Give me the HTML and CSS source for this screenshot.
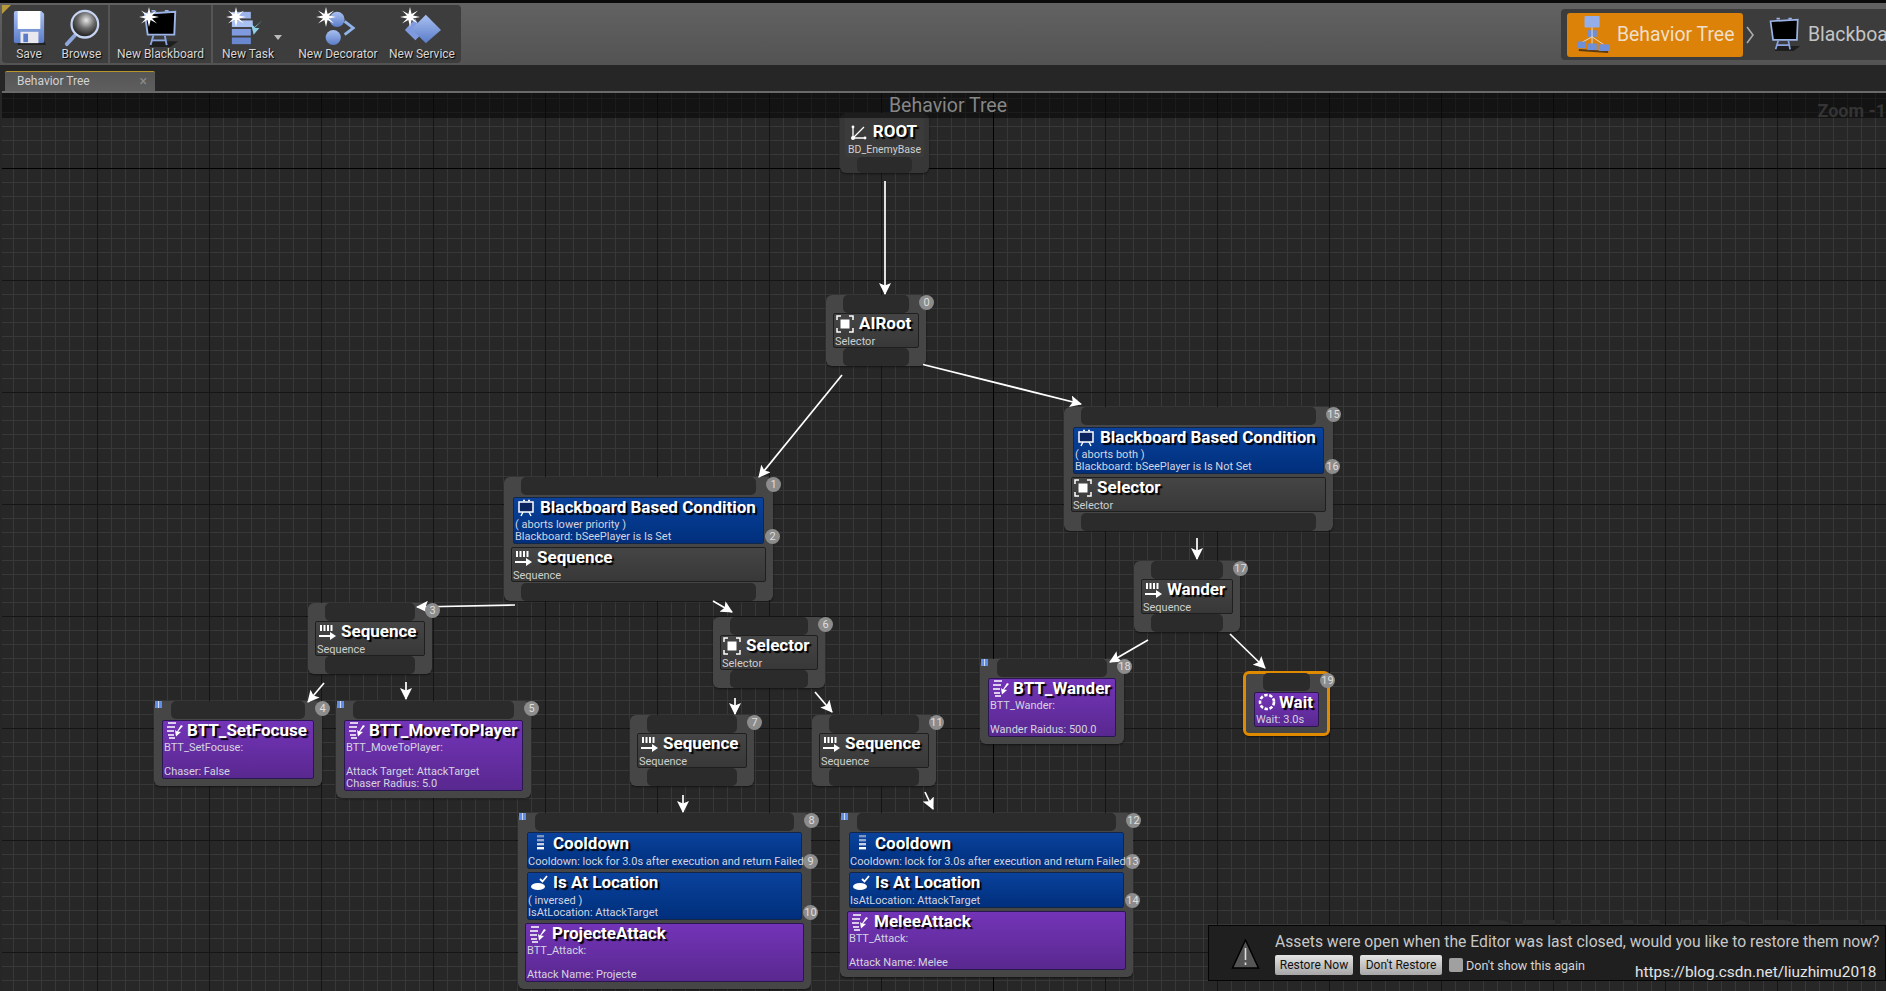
FILE: index.html
```html
<!doctype html>
<html>
<head>
<meta charset='utf-8'>
<title>Behavior Tree</title>
<link rel="stylesheet" href="styles.css">
</head>
<body>
<svg class='defs' width='0' height='0'>
  <defs>
    <linearGradient id='g_blue' x1='0' y1='0' x2='0' y2='1'><stop offset='0' stop-color='#a9c0f2'/><stop offset='1' stop-color='#5a7cc8'/></linearGradient>
    <radialGradient id='g_lens' cx='.55' cy='.35' r='.7'><stop offset='0' stop-color='#e8e8e8'/><stop offset='.45' stop-color='#6a6a6a'/><stop offset='1' stop-color='#0c0c0c'/></radialGradient>
    <symbol id='i_star' viewBox='0 0 20 20'><polygon fill='#fff' points='10,0 11.6,7 18,3.5 13,8.6 20,10 13,11.4 18,16.5 11.6,13 10,20 8.4,13 2,16.5 7,11.4 0,10 7,8.6 2,3.5 8.4,7'/></symbol>
    <symbol id='i_save' viewBox='0 0 36 38'>
      <path d='M6 37 L36 37 L33 30 L6 30Z' fill='#111' opacity='.6'/>
      <path d='M2 3 Q2 1 4 1 L31 1 L34 4 L34 33 Q34 35 32 35 L4 35 Q2 35 2 33Z' fill='url(#g_blue)'/>
      <rect x='6' y='1' width='24' height='19' fill='#fff'/>
      <rect x='9' y='23' width='19' height='12' fill='#e8e8ee'/>
      <rect x='12' y='25' width='5' height='9' fill='#5a7cc8'/>
    </symbol>
    <symbol id='i_browse' viewBox='0 0 40 40'>
      <path d='M4 37 L15 25' stroke='#8fa6dc' stroke-width='4' stroke-linecap='round'/>
      <circle cx='23' cy='16' r='14' fill='url(#g_lens)' stroke='#c6d4f2' stroke-width='2.4'/>
    </symbol>
    <symbol id='i_board' viewBox='0 0 40 40'>
      <path d='M10 34 L38 34 L30 40 L8 40Z' fill='#111' opacity='.7'/>
      <path d='M10 2 L14 2 M24 2 L28 2' stroke='#9db4e8' stroke-width='2'/>
      <path d='M3 5 L35 3 L34 27 L6 27Z' fill='#000' stroke='#9db4e8' stroke-width='2'/>
      <path d='M12 28 L9 38 M24 28 L26 38 M10 33 L25 33' stroke='#8aa4e0' stroke-width='2' fill='none'/>
    </symbol>
    <symbol id='i_task' viewBox='0 0 40 40'>
      <rect x='3' y='3' width='20' height='7' fill='#9db4e8'/>
      <rect x='3' y='12' width='22' height='7' fill='#a9c0f2'/>
      <rect x='3' y='21' width='20' height='7' fill='#7f9ade'/>
      <rect x='3' y='30' width='20' height='7' fill='#6a88d0'/>
      <path d='M35 12 L27 20 L32 20 L26 27 L23 15 L27 19Z' fill='#8fd0ea'/>
    </symbol>
    <symbol id='i_deco' viewBox='0 0 40 40'>
      <circle cx='19' cy='11' r='8' fill='url(#g_blue)'/>
      <circle cx='15' cy='30' r='8' fill='url(#g_blue)'/>
      <path d='M27 13 L36 20 L27 27' stroke='#8fb4ea' stroke-width='3' fill='none'/>
    </symbol>
    <symbol id='i_serv' viewBox='0 0 40 40'>
      <path d='M13 10 L2 22 L13 33 L20 26Z' fill='#7f9ade'/>
      <path d='M24 6 L40 22 L24 36 L9 21Z' fill='url(#g_blue)'/>
    </symbol>
    <symbol id='i_tree' viewBox='0 0 36 40'>
      <rect x='9' y='1' width='16' height='12' rx='1' fill='#93aee8'/>
      <rect x='12' y='16' width='10' height='7' fill='#6f8fd8'/>
      <path d='M17 13V31M17 23L6 29M17 23L29 31' stroke='#ddd' stroke-width='1'/>
      <path d='M3 37L34 39' stroke='#5a3a10' stroke-width='2'/>
      <rect x='1' y='28' width='9' height='7' fill='#6f8fd8'/>
      <rect x='12' y='30' width='10' height='7' fill='#6f8fd8'/>
      <rect x='24' y='31' width='11' height='7' fill='#6f8fd8'/>
    </symbol>
    <symbol id='n_board' viewBox='0 0 18 18'>
      <path d='M2 3H16V13H2Z' fill='#0c2560' stroke='#fff' stroke-width='1.5'/>
      <path d='M6 13L4 17M12 13L14 17M6 1.5H8M11 1.5H13' stroke='#fff' stroke-width='1.4'/>
    </symbol>
    <symbol id='n_seq' viewBox='0 0 18 18'>
      <path d='M3 2V8M6.5 2V8M10 2V8M13.5 2V8' stroke='#fff' stroke-width='2'/>
      <path d='M1 12H13V14H1Z' fill='#fff'/><path d='M12 9L18 13L12 17Z' fill='#fff'/>
    </symbol>
    <symbol id='n_sel' viewBox='0 0 18 18'>
      <rect x='4.5' y='4.5' width='9' height='9' fill='#fff'/>
      <path d='M1 5V1H5M13 1H17V5M17 13V17H13M5 17H1V13' stroke='#fff' stroke-width='1.5' fill='none'/>
    </symbol>
    <symbol id='n_task' viewBox='0 0 18 18'>
      <path d='M2 2H10M1 6H9M1 10H8M2 14H8M3 17H9' stroke='#fff' stroke-width='1.6'/>
      <path d='M17 5L12 10.5L15 11L10 15.5L9 9L11 10.5L15 4Z' fill='#fff'/>
    </symbol>
    <symbol id='n_cool' viewBox='0 0 18 18'>
      <rect x='6' y='1' width='7' height='2.4' fill='#7f95bd'/>
      <rect x='6' y='5' width='7' height='2.4' fill='#97a9cb'/>
      <rect x='6' y='9' width='7' height='2.4' fill='#c6d0e4'/>
      <rect x='6' y='13' width='7' height='2.4' fill='#fff'/>
    </symbol>
    <symbol id='n_loc' viewBox='0 0 18 18'>
      <ellipse cx='7' cy='12.5' rx='7' ry='3.6' fill='#fff'/>
      <path d='M9 5L11.5 7.5L16 2' stroke='#fff' stroke-width='1.8' fill='none'/>
    </symbol>
    <symbol id='n_wait' viewBox='0 0 18 18'>
      <circle cx='9' cy='9' r='7' stroke='#fff' stroke-width='2.6' stroke-dasharray='3.4 1.6' fill='none'/>
    </symbol>
    <symbol id='n_root' viewBox='0 0 18 18'>
      <path d='M3 15L14 4M3 15V5M3 15H14' stroke='#fff' stroke-width='1.3' fill='none'/>
      <circle cx='3' cy='15' r='2' fill='#fff'/><circle cx='3' cy='4' r='1.4' fill='#fff'/><circle cx='15' cy='15' r='1.4' fill='#fff'/>
    </symbol>
    <marker id='head' viewBox='0 0 12 12' refX='11' refY='6' markerUnits='userSpaceOnUse' markerWidth='12' markerHeight='12' orient='auto'>
      <path d='M0 0L12 6L0 12L2.5 6Z' fill='#fff'/>
    </marker>
  </defs>
</svg>

<div class='topbar'>
  <div class='toolbar'>
    <i class='corner'></i>
    <div class='tool tool_save'><svg class='tool_icon'><use href='#i_save'/></svg><span>Save</span></div>
    <div class='tool tool_browse'><svg class='tool_icon'><use href='#i_browse'/></svg><span>Browse</span></div>
    <b class='sep'></b>
    <div class='tool tool_bb'><span class='icon_wrap'><svg class='tool_icon'><use href='#i_board'/></svg><svg class='spark'><use href='#i_star'/></svg></span><span>New Blackboard</span></div>
    <b class='sep'></b>
    <div class='tool tool_task'><span class='icon_wrap'><svg class='tool_icon'><use href='#i_task'/></svg><svg class='spark'><use href='#i_star'/></svg></span><span>New Task</span><i class='drop'></i></div>
    <div class='tool tool_deco'><span class='icon_wrap'><svg class='tool_icon'><use href='#i_deco'/></svg><svg class='spark'><use href='#i_star'/></svg></span><span>New Decorator</span></div>
    <div class='tool tool_serv'><span class='icon_wrap'><svg class='tool_icon'><use href='#i_serv'/></svg><svg class='spark'><use href='#i_star'/></svg></span><span>New Service</span></div>
  </div>
  <div class='crumbs'>
    <div class='crumb_on'><svg class='crumb_icon'><use href='#i_tree'/></svg><span>Behavior Tree</span></div>
    <svg class='chev' viewBox='0 0 10 20'><path d='M2 2L8 10L2 18' stroke='#aaa' stroke-width='1.6' fill='none'/></svg>
    <div class='crumb_off'><svg class='crumb_icon'><use href='#i_board'/></svg><span>Blackboard</span></div>
  </div>
</div>

<div class='tabrow'>
  <div class='tab'><span>Behavior Tree</span><em>×</em></div>
</div>

<div class='graph'>
  <div class='graph_title'><span>Behavior Tree</span><b>Zoom -1</b></div>

  <div class='node n_root'>
    <div class='box box_root'>
      <div class='title'><svg class='nicon'><use href='#n_root'/></svg>ROOT</div>
      <div class='sub'>BD_EnemyBase</div>
    </div>
    <div class='pin'></div>
  </div>

  <div class='node n_airoot'>
    <div class='pin'></div>
    <div class='box'>
      <div class='title'><svg class='nicon'><use href='#n_sel'/></svg>AIRoot</div>
      <div class='sub'>Selector</div>
    </div>
    <div class='pin'></div>
    <span class='badge'>0</span>
  </div>

  <div class='node n_bbl'>
    <div class='pin'></div>
    <div class='row blue first'>
      <div class='title'><svg class='nicon'><use href='#n_board'/></svg>Blackboard Based Condition</div>
      <div class='sub'>( aborts lower priority )<br>Blackboard: bSeePlayer is Is Set</div>
      <span class='badge'>2</span>
    </div>
    <div class='box wide'>
      <div class='title'><svg class='nicon'><use href='#n_seq'/></svg>Sequence</div>
      <div class='sub'>Sequence</div>
    </div>
    <div class='pin'></div>
    <span class='badge'>1</span>
  </div>

  <div class='node n_bbr'>
    <div class='pin'></div>
    <div class='row blue first'>
      <div class='title'><svg class='nicon'><use href='#n_board'/></svg>Blackboard Based Condition</div>
      <div class='sub'>( aborts both )<br>Blackboard: bSeePlayer is Is Not Set</div>
      <span class='badge'>16</span>
    </div>
    <div class='box wide'>
      <div class='title'><svg class='nicon'><use href='#n_sel'/></svg>Selector</div>
      <div class='sub'>Selector</div>
    </div>
    <div class='pin'></div>
    <span class='badge'>15</span>
  </div>

  <div class='node n_seq3'>
    <div class='pin'></div>
    <div class='box'>
      <div class='title'><svg class='nicon'><use href='#n_seq'/></svg>Sequence</div>
      <div class='sub'>Sequence</div>
    </div>
    <div class='pin'></div>
    <span class='badge'>3</span>
  </div>

  <div class='node n_sel6'>
    <div class='pin'></div>
    <div class='box'>
      <div class='title'><svg class='nicon'><use href='#n_sel'/></svg>Selector</div>
      <div class='sub'>Selector</div>
    </div>
    <div class='pin'></div>
    <span class='badge'>6</span>
  </div>

  <div class='node n_seq7'>
    <div class='pin'></div>
    <div class='box'>
      <div class='title'><svg class='nicon'><use href='#n_seq'/></svg>Sequence</div>
      <div class='sub'>Sequence</div>
    </div>
    <div class='pin'></div>
    <span class='badge'>7</span>
  </div>

  <div class='node n_seq11'>
    <div class='pin'></div>
    <div class='box'>
      <div class='title'><svg class='nicon'><use href='#n_seq'/></svg>Sequence</div>
      <div class='sub'>Sequence</div>
    </div>
    <div class='pin'></div>
    <span class='badge'>11</span>
  </div>

  <div class='node n_wander'>
    <div class='pin'></div>
    <div class='box'>
      <div class='title'><svg class='nicon'><use href='#n_seq'/></svg>Wander</div>
      <div class='sub'>Sequence</div>
    </div>
    <div class='pin'></div>
    <span class='badge'>17</span>
  </div>

  <div class='node n_focuse leaf'>
    <i class='flag'></i>
    <div class='pin'></div>
    <div class='row purple'>
      <div class='title'><svg class='nicon'><use href='#n_task'/></svg>BTT_SetFocuse</div>
      <div class='sub'>BTT_SetFocuse:<br><br>Chaser: False</div>
    </div>
    <span class='badge'>4</span>
  </div>

  <div class='node n_move leaf'>
    <i class='flag'></i>
    <div class='pin'></div>
    <div class='row purple'>
      <div class='title'><svg class='nicon'><use href='#n_task'/></svg>BTT_MoveToPlayer</div>
      <div class='sub'>BTT_MoveToPlayer:<br><br>Attack Target: AttackTarget<br>Chaser Radius: 5.0</div>
    </div>
    <span class='badge'>5</span>
  </div>

  <div class='node n_btw leaf'>
    <i class='flag'></i>
    <div class='pin'></div>
    <div class='row purple'>
      <div class='title'><svg class='nicon'><use href='#n_task'/></svg>BTT_Wander</div>
      <div class='sub'>BTT_Wander:<br><br>Wander Raidus: 500.0</div>
    </div>
    <span class='badge'>18</span>
  </div>

  <div class='node n_wait leaf'>
    <div class='pin'></div>
    <div class='row purple'>
      <div class='title'><svg class='nicon'><use href='#n_wait'/></svg>Wait</div>
      <div class='sub'>Wait: 3.0s</div>
    </div>
    <span class='badge'>19</span>
  </div>

  <div class='node n_cooll leaf'>
    <i class='flag'></i>
    <div class='pin'></div>
    <div class='row blue cool cool_top'>
      <div class='title wide_icon'><svg class='nicon'><use href='#n_cool'/></svg>Cooldown</div>
      <div class='sub'>Cooldown: lock for 3.0s after execution and return Failed</div>
      <span class='badge'>9</span>
    </div>
    <div class='row blue cool'>
      <div class='title wide_icon'><svg class='nicon'><use href='#n_loc'/></svg>Is At Location</div>
      <div class='sub'>( inversed )<br>IsAtLocation: AttackTarget</div>
      <span class='badge'>10</span>
    </div>
    <div class='row purple big'>
      <div class='title'><svg class='nicon'><use href='#n_task'/></svg>ProjecteAttack</div>
      <div class='sub'>BTT_Attack:<br><br>Attack Name: Projecte</div>
    </div>
    <span class='badge'>8</span>
  </div>

  <div class='node n_coolr leaf'>
    <i class='flag'></i>
    <div class='pin'></div>
    <div class='row blue cool cool_top'>
      <div class='title wide_icon'><svg class='nicon'><use href='#n_cool'/></svg>Cooldown</div>
      <div class='sub'>Cooldown: lock for 3.0s after execution and return Failed</div>
      <span class='badge'>13</span>
    </div>
    <div class='row blue cool'>
      <div class='title wide_icon'><svg class='nicon'><use href='#n_loc'/></svg>Is At Location</div>
      <div class='sub'>IsAtLocation: AttackTarget</div>
      <span class='badge'>14</span>
    </div>
    <div class='row purple big'>
      <div class='title'><svg class='nicon'><use href='#n_task'/></svg>MeleeAttack</div>
      <div class='sub'>BTT_Attack:<br><br>Attack Name: Melee</div>
    </div>
    <span class='badge'>12</span>
  </div>

  <svg class='wires' width='1884' height='898'>
    <g stroke='#fff' stroke-width='1.7' marker-end='url(#head)'>
      <line x1='883' y1='88' x2='883' y2='201'/>
      <line x1='840' y1='282' x2='757' y2='384'/>
      <line x1='921' y1='271.5' x2='1079' y2='311'/>
      <line x1='513' y1='512' x2='415' y2='514'/>
      <line x1='711' y1='508' x2='730' y2='519'/>
      <line x1='322' y1='590' x2='306' y2='609'/>
      <line x1='404' y1='589' x2='404' y2='606'/>
      <line x1='733' y1='605' x2='733' y2='621'/>
      <line x1='813' y1='599' x2='830' y2='619'/>
      <line x1='681' y1='702' x2='681' y2='719'/>
      <line x1='923' y1='699' x2='931' y2='716'/>
      <line x1='1195' y1='445' x2='1195' y2='466'/>
      <line x1='1146' y1='547' x2='1108' y2='569'/>
      <line x1='1228' y1='541' x2='1263' y2='575'/>
    </g>
  </svg>

  <div class='watermark'>BEHAVIOR TREE</div>

  <div class='toast'>
    <svg class='warn' viewBox='0 0 28 30'>
      <path d='M14 1L27 29H1Z' fill='#555' stroke='#000' stroke-width='1.5'/>
      <path d='M14 9V21M14 23.5V26' stroke='#ddd' stroke-width='1.6'/>
    </svg>
    <div class='toast_body'>
      <div class='toast_msg'>Assets were open when the Editor was last closed, would you like to restore them now?</div>
      <div class='toast_actions'>
        <button class='btn btn_restore'>Restore Now</button>
        <button class='btn btn_dont'>Don't Restore</button>
        <i class='check'></i>
        <span class='check_label'>Don't show this again</span>
        <span class='credit'>https://blog.csdn.net/liuzhimu2018</span>
      </div>
    </div>
  </div>
</div>
</body>
</html>
```

FILE: styles.css
```css
html, body {
  margin: 0;
  padding: 0;
  width: 1886px;
  height: 991px;
  overflow: hidden;
  background: #262626;
  font-family: Roboto, "Liberation Sans", sans-serif;
}

.defs {
  position: absolute;
}

/* top strip */
.topbar {
  height: 62px;
  border-top: 3px solid #0a0a0a;
  background: linear-gradient(#626262, #535353);
  display: flex;
  justify-content: space-between;
  overflow: hidden;
}
.toolbar {
  position: relative;
  margin: 2px 0 2px 2px;
  width: 459px;
  box-sizing: border-box;
  padding-left: 1px;
  background: #3d3d3d;
  border-radius: 4px;
  display: flex;
  color: #d6d6d6;
  font-size: 12px;
}
.corner {
  position: absolute;
  left: 0;
  top: 0;
  border-top: 9px solid #b89a3a;
  border-right: 9px solid transparent;
}
.tool {
  position: relative;
  display: flex;
  flex-direction: column;
  align-items: center;
  justify-content: flex-end;
  padding-bottom: 2px;
  box-sizing: border-box;
  white-space: nowrap;
  text-shadow: 1px 1px 1px #000;
}
.tool_icon {
  width: 38px;
  height: 38px;
  display: block;
}
.tool_save { width: 52px; }
.tool_browse { width: 53px; }
.tool_bb { width: 101px; }
.tool_task { width: 80px; padding-right: 10px; }
.tool_deco { width: 90px; }
.tool_serv { width: 78px; }
.tool_save .tool_icon { width: 34px; }
.icon_wrap {
  position: relative;
}
.spark {
  position: absolute;
  left: -3px;
  top: -2px;
  width: 20px;
  height: 20px;
}
.drop {
  position: absolute;
  right: 11px;
  top: 30px;
  border-top: 5px solid #bbb;
  border-left: 4px solid transparent;
  border-right: 4px solid transparent;
}
.sep {
  width: 2px;
  background: #555;
  margin: 0;
}
.crumbs {
  margin: 6px 0 0;
  height: 51px;
  width: 325px;
  box-sizing: border-box;
  background: #3c3c3c;
  border-radius: 4px 0 0 4px;
  padding: 4px 0 0 6px;
  display: flex;
  align-items: flex-start;
  overflow: hidden;
  font-size: 19.4px;
  flex: none;
}
.crumb_on {
  width: 176px;
  height: 44px;
  box-sizing: border-box;
  padding: 0 0 2px 9px;
  background: #dc8208;
  border-radius: 3px;
  color: #f0dfc8;
  display: flex;
  align-items: center;
  gap: 7px;
  flex: none;
}
.crumb_off {
  height: 44px;
  padding-bottom: 2px;
  box-sizing: border-box;
  display: flex;
  align-items: center;
  gap: 6px;
  color: #c4c4c4;
  white-space: nowrap;
}
.crumb_icon {
  width: 34px;
  height: 38px;
  flex: none;
}
.chev {
  width: 10px;
  height: 20px;
  margin: 12px 13px 0 2px;
  flex: none;
}

/* tab row */
.tabrow {
  height: 26px;
  background: #262626;
  box-sizing: border-box;
  padding: 6px 0 0 5px;
}
.tab {
  width: 150px;
  height: 20px;
  box-sizing: border-box;
  background: linear-gradient(#565656, #5e5e5e);
  border-top: 1px solid #b8962e;
  border-radius: 2px 2px 0 0;
  padding: 0 8px 2px 12px;
  display: flex;
  justify-content: space-between;
  align-items: center;
  color: #d2d2d2;
  font-size: 12px;
}
.tab em {
  font-style: normal;
  color: #8a8a8a;
  font-size: 14px;
}

/* graph canvas */
.graph {
  position: relative;
  height: 898px;
  margin-left: 2px;
  overflow: hidden;
  border-top: 2px solid #6a6a6a;
  box-sizing: content-box;
  background-color: #272727;
  background-image:
    linear-gradient(to right, #000 1px, transparent 1px),
    linear-gradient(to bottom, #000 1px, transparent 1px),
    linear-gradient(to right, #151515 1px, transparent 1px),
    linear-gradient(to bottom, #151515 1px, transparent 1px),
    linear-gradient(to right, #383838 1px, transparent 1px),
    linear-gradient(to bottom, #383838 1px, transparent 1px);
  background-size: 1884px 898px, 1884px 898px, 112px 112px, 112px 112px, 14px 14px, 14px 14px;
  background-repeat: no-repeat, no-repeat, repeat, repeat, repeat, repeat;
  background-position: 991px 0, 0 75px, 95px 0, 0 75px, 11px 0, 0 5px;
}
.graph_title {
  position: absolute;
  z-index: 5;
  left: 0;
  right: 0;
  top: 0;
  height: 25px;
  box-sizing: border-box;
  padding-left: 8px;
  background: rgba(0, 0, 0, .5);
  color: #868686;
  font-size: 19.5px;
  line-height: 25px;
  text-align: center;
}
.graph_title b {
  position: absolute;
  right: 0;
  top: 5px;
  color: #343434;
  font-size: 18px;
}
.wires {
  position: absolute;
  z-index: 3;
  left: 0;
  top: 0;
}

/* nodes */
.node {
  position: absolute;
  box-sizing: border-box;
  background: #464646;
  border-radius: 6px;
  display: flex;
  flex-direction: column;
  box-shadow: 0 1px 2px rgba(0, 0, 0, .5);
}
.leaf {
  padding-bottom: 7px;
}
.pin {
  height: 18px;
  margin: 0 17px;
  background: #2b2b2b;
  border-radius: 5px;
  flex: none;
}
.box, .row {
  position: relative;
  box-sizing: border-box;
  border: 1px solid #1f1f1f;
  border-radius: 2px;
  overflow: visible;
}
.box {
  margin: 0 7px;
  height: 35px;
  background: linear-gradient(#454545, #383838);
}
.box.wide {
  margin-top: 3px;
  margin-bottom: 1px;
}
.row {
  margin: 1px 8px 0;
  padding-left: 1px;
}
.blue {
  margin: 0 9px;
  background: linear-gradient(#0a429c, #002f7c);
  border-color: #12264a;
}
.blue.first {
  margin-top: 2px;
}
.cool {
  margin-top: 3px;
  padding: 0;
}
.cool .sub {
  padding-top: 1px;
}
.cool_top {
  margin-top: 1px;
}
.cool_top .title {
  height: 22px;
}
.purple {
  background: linear-gradient(#7334b8, #59288f);
  border-color: #2a1650;
}
.purple.big {
  margin: 3px 7px 0;
}
.title {
  height: 21px;
  box-sizing: border-box;
  padding-bottom: 2px;
  display: flex;
  align-items: center;
  color: #fff;
  font-size: 17px;
  font-weight: 700;
  line-height: 19px;
  white-space: nowrap;
  text-shadow: 2px 2px 1px #000;
}
.nicon {
  width: 18px;
  height: 18px;
  margin: 0 5px 0 2px;
  flex: none;
}
.wide_icon .nicon {
  margin-right: 4px;
  margin-left: 3px;
}
.purple .nicon {
  margin-right: 3px;
}
.purple.big .nicon {
  margin-right: 5px;
}
.purple .title {
  padding-bottom: 3px;
}
.purple.big .title {
  padding-bottom: 2px;
}
.sub {
  color: #d4d4e0;
  font-size: 11px;
  line-height: 12px;
  white-space: nowrap;
}
.box .sub {
  padding: 1px 0 0 1px;
  color: #cfcfcf;
}
.badge {
  position: absolute;
  top: 0;
  right: -8px;
  z-index: 4;
  width: 15px;
  height: 15px;
  border-radius: 50%;
  background: #8c8c8c;
  color: #dedede;
  font-size: 11px;
  line-height: 15px;
  text-align: center;
}
.row .badge {
  top: auto;
  right: -17px;
  bottom: -1px;
}
.flag {
  position: absolute;
  left: 1px;
  top: 0;
  width: 7px;
  height: 7px;
  background: linear-gradient(to right, #5f8ee8 45%, #d0dcf5 45%, #d0dcf5 55%, #5f8ee8 55%);
}

.n_root { left: 838px; top: 20px; width: 89px; height: 60px; background: #373737; }
.n_airoot { left: 824px; top: 202px; width: 100px; }
.n_bbl { left: 502px; top: 384px; width: 269px; }
.n_bbr { left: 1062px; top: 314px; width: 269px; }
.n_seq3 { left: 306px; top: 510px; width: 124px; }
.n_sel6 { left: 711px; top: 524px; width: 112px; }
.n_seq7 { left: 628px; top: 622px; width: 124px; }
.n_seq11 { left: 810px; top: 622px; width: 124px; }
.n_wander { left: 1132px; top: 468px; width: 106px; }
.n_focuse { left: 152px; top: 608px; width: 168px; }
.n_move { left: 334px; top: 608px; width: 195px; }
.n_btw { left: 978px; top: 566px; width: 144px; }
.n_wait { left: 1241px; top: 578px; width: 87px; border: 3px solid #e08a00; padding-bottom: 6px; }
.n_wait .pin { margin: -1px 17px 0; }
.n_wait .badge { top: -1px; right: -8px; }
.n_cooll { left: 516px; top: 720px; width: 293px; }
.n_coolr { left: 838px; top: 720px; width: 293px; }

.box_root {
  border: 0;
  height: 44px;
  margin: 0 5px;
  padding-top: 9px;
  text-align: center;
  background: #3b3b3b;
}
.box_root .title {
  justify-content: center;
  padding-right: 4px;
}
.box_root .sub {
  font-size: 10.5px;
  padding: 1px 0 0;
}
.n_root .pin {
  height: 16px;
}

/* bottom right */
.watermark {
  position: absolute;
  left: 1473px;
  top: 813px;
  color: #303030;
  font-size: 68px;
  font-weight: 700;
  white-space: nowrap;
}
.toast {
  position: absolute;
  z-index: 6;
  left: 1206px;
  top: 832px;
  width: 678px;
  height: 56px;
  box-sizing: border-box;
  background: #1f1f1f;
  border: 1px solid #050505;
  display: flex;
  align-items: flex-start;
  padding: 6px 0 0 22px;
}
.warn {
  width: 29px;
  height: 30px;
  margin: 7px 15px 0 0;
  flex: none;
}
.toast_body {
  flex: 1;
}
.toast_msg {
  color: #c8c8c8;
  font-size: 15.7px;
  line-height: 20px;
  white-space: nowrap;
}
.toast_actions {
  margin-top: 3px;
  display: flex;
  align-items: center;
  color: #d4d4d4;
  font-size: 12.6px;
  position: relative;
}
.btn {
  height: 20px;
  margin: 0 7px 0 0;
  padding: 0;
  border: 0;
  border-radius: 2px;
  background: linear-gradient(#e4e4e4, #a6a6a6);
  color: #111;
  font-family: inherit;
  font-size: 12px;
}
.btn_restore { width: 78px; }
.btn_dont { width: 82px; }
.check {
  width: 14px;
  height: 14px;
  border-radius: 2px;
  background: #a0a0a0;
  margin-right: 3px;
}
.credit {
  position: absolute;
  left: 360px;
  top: 8px;
  color: #e4e4e4;
  font-size: 15.4px;
  white-space: nowrap;
}
```
